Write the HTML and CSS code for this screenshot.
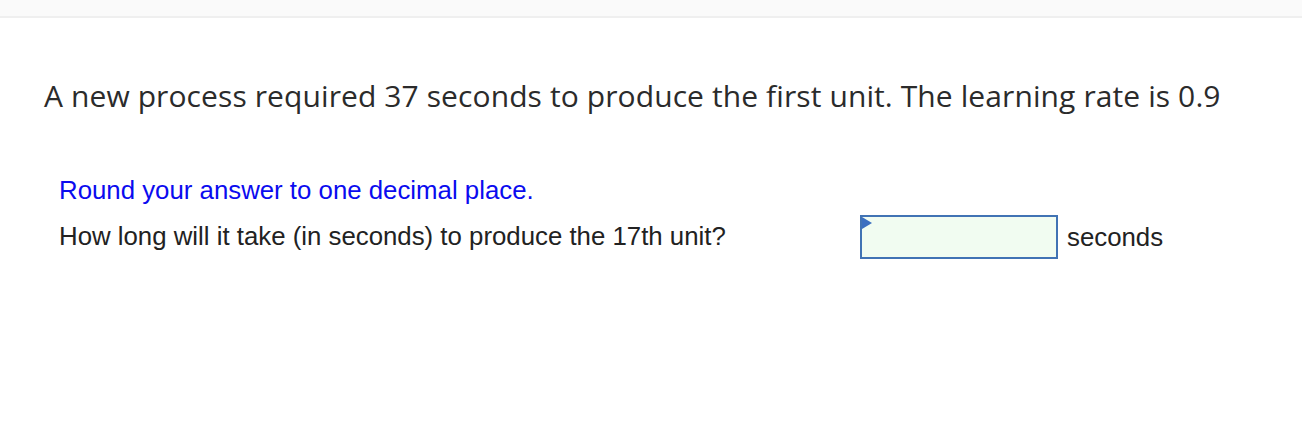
FILE: index.html
```html
<!DOCTYPE html>
<html>
<head>
<meta charset="utf-8">
<link rel="stylesheet" href="styles.css">
</head>
<body>
<div class="topbar"></div>
<main class="content">
  <p class="prompt">A new process required 37 seconds to produce the first unit. The learning rate is 0.9</p>
  <div class="question">
    <p class="hint">Round your answer to one decimal place.</p>
    <div class="row">
      <span class="label">How long will it take (in seconds) to produce the 17th unit?</span>
      <div class="answer">
        <div class="input"><span class="flag"></span></div>
        <span class="unit">seconds</span>
      </div>
    </div>
  </div>
</main>
</body>
</html>
```

FILE: styles.css
```css
html, body {
  margin: 0;
  padding: 0;
  background: #fff;
}
.topbar {
  height: 16px;
  background: #fafafa;
  border-bottom: 2px solid #efefef;
}
.content {
  padding: 0 0 0 44px;
}
.prompt {
  margin: 0;
  padding-top: 58px;
  font-family: "Open Sans", sans-serif;
  font-size: 30px;
  letter-spacing: 0.1px;
  line-height: 40px;
  color: #2b2b2b;
}
.question {
  padding-left: 15px;
  margin-top: 59px;
  font-family: "Liberation Sans", Arial, sans-serif;
  font-size: 25.8px;
}
.hint {
  margin: 0;
  color: #0b0bef;
  line-height: 30px;
}
.row {
  display: flex;
  align-items: flex-start;
  margin-top: 10px;
}
.label {
  width: 801px;
  line-height: 42px;
  color: #222;
}
.answer {
  display: flex;
  align-items: center;
  gap: 9px;
}
.input {
  position: relative;
  width: 194px;
  height: 40px;
  border: 2px solid #4173b4;
  background: #f1fcf1;
}
.flag {
  position: absolute;
  left: 0;
  top: 0;
  width: 0;
  height: 0;
  border-top: 6.5px solid transparent;
  border-bottom: 6.5px solid transparent;
  border-left: 10px solid #3b6fc0;
}
.unit {
  color: #222;
}
```
